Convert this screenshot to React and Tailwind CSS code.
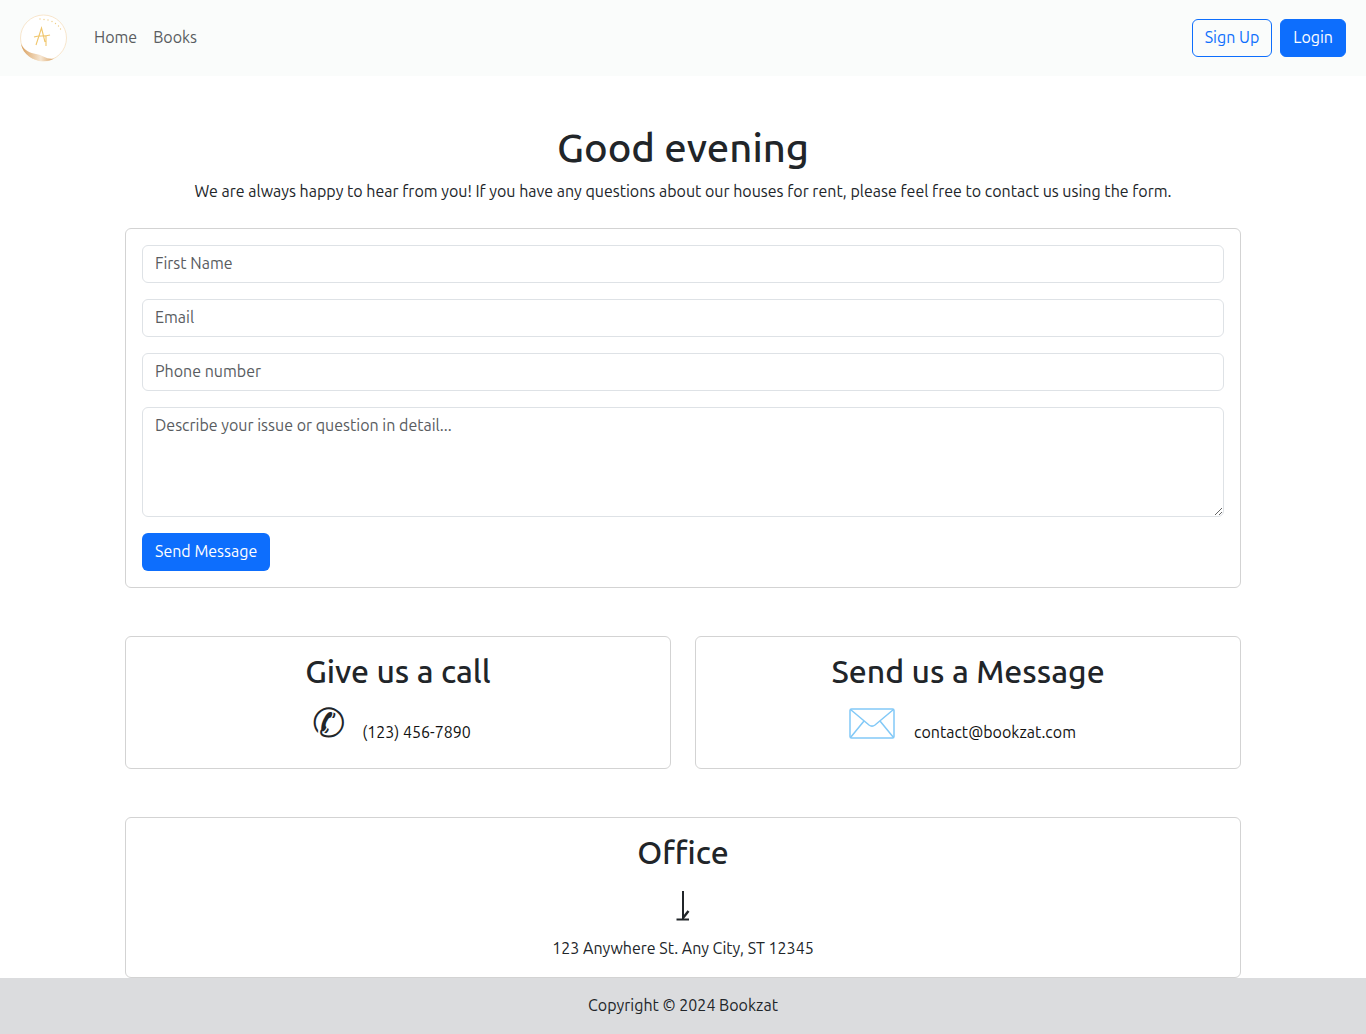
function Card({ children, className = '' }) {
  return <div className={`rounded-[6px] border border-[#d3d3d3] bg-white ${className}`}>{children}</div>;
}

function Logo() {
  return (
    <svg width="50" height="50" viewBox="0 0 50 50" className="block">
      <defs>
        <linearGradient id="wave" x1="0" y1="0" x2="1" y2="0">
          <stop offset="0" stopColor="#d9a05f" />
          <stop offset="0.6" stopColor="#f6e6d2" />
          <stop offset="1" stopColor="#d8a163" />
        </linearGradient>
      </defs>
      <circle cx="24.5" cy="25" r="23" fill="#ffffff" stroke="#f6dfc0" strokeWidth="0.8" />
      <path d="M2 31 C 4 42, 15 48.5, 25 48 C 29 48, 32 47.5, 35 45.5 C 28 47, 24 42, 17 41 C 11 40, 6 38, 2 31 Z" fill="url(#wave)" />
      <path d="M17 32 L22.5 15 L26 29 M15 24 C 20 22, 25 24, 31 22 M27 23 L27 33" stroke="#f0c66c" strokeWidth="1.1" fill="none" />
      <g fill="#f0d08a">
        <circle cx="21" cy="6" r="0.7" />
        <circle cx="25" cy="6.5" r="0.7" />
        <circle cx="29" cy="7" r="0.7" />
        <circle cx="33" cy="8.5" r="0.7" />
        <circle cx="36.5" cy="10.5" r="0.7" />
        <circle cx="39.5" cy="13" r="0.7" />
        <circle cx="41.5" cy="16" r="0.7" />
      </g>
    </svg>
  );
}

function EnvelopeIcon() {
  return (
    <svg width="46" height="31" viewBox="0 0 46 31" fill="none" stroke="#82c9f7" strokeWidth="1.5" className="mt-[10px] shrink-0">
      <rect x="1" y="1" width="44" height="29" rx="1.5" />
      <path d="M1.5 1.5 L20 17 C 22 18.5, 24 18.5, 26 17 L44.5 1.5" />
      <path d="M1.5 29.5 L15 13 M44.5 29.5 L31 13" />
    </svg>
  );
}

function PinIcon() {
  return (
    <svg width="14" height="32" viewBox="0 0 14 32" fill="none" stroke="#212529" className="mx-auto mt-[18px] block">
      <path d="M7 2 V30" strokeWidth="2" />
      <path d="M0.5 30.5 H13" strokeWidth="2" />
      <path d="M12.5 22 L7 29" strokeWidth="2.4" />
    </svg>
  );
}

export default function App() {
  const field = 'h-[38px] rounded-[6px] border border-[#dee2e6] px-3 pb-[2px] placeholder:text-[#595c5f]';

  return (
    <div className="min-h-[1034px] bg-white font-['Ubuntu','Noto_Sans',sans-serif] text-[16px] text-[#212529]">
      <nav className="flex h-[76px] items-center bg-[#fafcfb] pl-[19px] pr-[20px]">
        <Logo />
        <div className="ml-[25px] flex items-center gap-4 pb-[2px] text-[#595c5f]">
          <a>Home</a>
          <a>Books</a>
        </div>
        <div className="ml-auto flex items-center gap-2">
          <button className="h-[38px] rounded-[6px] border border-[#0d6efd] px-3 pb-[2px] text-[#0d6efd]">Sign Up</button>
          <button className="h-[38px] rounded-[6px] border border-[#0d6efd] bg-[#0d6efd] px-3 pb-[2px] text-white">Login</button>
        </div>
      </nav>

      <main className="mx-auto w-[1116px]">
        <h1 className="mt-[48px] text-center text-[40px] font-medium leading-[48px]">Good evening</h1>
        <p className="mb-[25px] mt-[7px] text-center leading-[24px]">We are always happy to hear from you! If you have any questions about our houses for rent, please feel free to contact us using the form.</p>

        <Card className="flex flex-col gap-4 p-4">
          <input placeholder="First Name" className={field} />
          <input placeholder="Email" className={field} />
          <input placeholder="Phone number" className={field} />
          <textarea placeholder="Describe your issue or question in detail..." className="h-[110px] rounded-[6px] border border-[#dee2e6] px-3 pb-[6px] pt-[5px] placeholder:text-[#595c5f]" />
          <div><button className="h-[38px] rounded-[6px] bg-[#0d6efd] px-[13px] pb-[2px] text-white">Send Message</button></div>
        </Card>

        <div className="mt-[48px] grid grid-cols-2 gap-6">
          <Card className="h-[133px] pt-[15px] text-center">
            <h2 className="text-[32px] font-medium leading-[38px]">Give us a call</h2>
            <div className="mt-[9px] flex items-start justify-center gap-4 pr-[13px]">
              <span className="text-[40px] leading-[48px]">✆</span>
              <span className="mt-[21px] leading-[24px] text-[#111111]">(123) 456-7890</span>
            </div>
          </Card>
          <Card className="h-[133px] pt-[15px] text-center">
            <h2 className="text-[32px] font-medium leading-[38px]">Send us a Message</h2>
            <div className="mt-[8px] flex items-start justify-center gap-[19px] pr-[11px]">
              <EnvelopeIcon />
              <span className="mt-[22px] leading-[24px] text-[#111111]">contact@bookzat.com</span>
            </div>
          </Card>
        </div>

        <Card className="mt-[48px] h-[161px] pt-[15px] text-center">
          <h2 className="text-[32px] font-medium leading-[38px]">Office</h2>
          <PinIcon />
          <p className="mt-[15px] leading-[24px]">123 Anywhere St. Any City, ST 12345</p>
        </Card>
      </main>

      <footer className="flex h-[56px] items-center justify-center bg-[#dbdcde] pb-[2px]">Copyright © 2024 Bookzat</footer>
    </div>
  );
}
